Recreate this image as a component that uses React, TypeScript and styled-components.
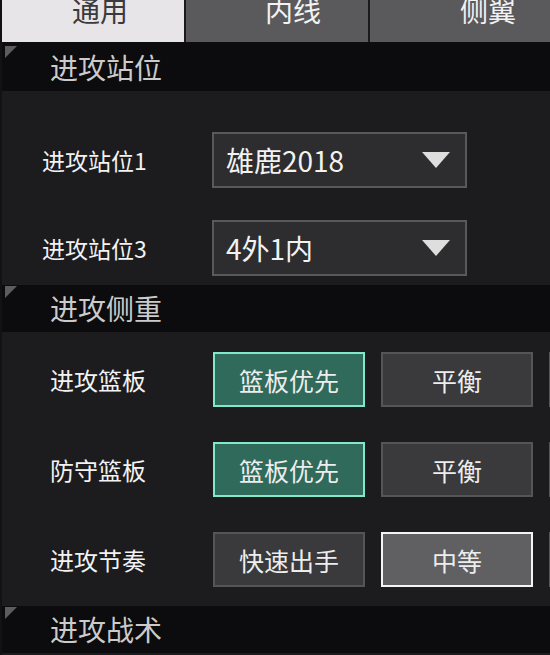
import styled, { createGlobalStyle } from 'styled-components';

const GlobalStyle = createGlobalStyle`
  html, body {
    margin: 0;
    padding: 0;
    background: #1c1b1d;
  }
  * {
    box-sizing: border-box;
  }
`;

type Choice = { text: string; state?: 'teal' | 'picked' };

// text in each tab sits a bit right of centre
const tabs = [
  { text: '通用', shift: 70 },
  { text: '内线', shift: 79 },
  { text: '侧翼', shift: 90 },
];

const stance = [
  { label: '进攻站位1', value: '雄鹿2018' },
  { label: '进攻站位3', value: '4外1内' },
];

const focus: Array<{ label: string; choices: Choice[] }> = [
  { label: '进攻篮板', choices: [{ text: '篮板优先', state: 'teal' }, { text: '平衡' }, { text: '' }] },
  { label: '防守篮板', choices: [{ text: '篮板优先', state: 'teal' }, { text: '平衡' }, { text: '' }] },
  { label: '进攻节奏', choices: [{ text: '快速出手' }, { text: '中等', state: 'picked' }, { text: '' }] },
];

const App = () => (
  <Page>
    <GlobalStyle />
    <TabBar>
      {tabs.map((t, i) => (
        <Tab key={t.text} $active={i === 0} $shift={t.shift}>
          <TabLabel>{t.text}</TabLabel>
        </Tab>
      ))}
    </TabBar>

    <SectionHeader>进攻站位</SectionHeader>
    <StanceList>
      {stance.map((row) => (
        <Row key={row.label}>
          <StanceLabel>{row.label}</StanceLabel>
          <Select>
            <span>{row.value}</span>
            <Arrow viewBox="0 0 28 16">
              <polygon points="0,0 28,0 14,16" fill="#dedede" />
            </Arrow>
          </Select>
        </Row>
      ))}
    </StanceList>

    <SectionHeader $tall>进攻侧重</SectionHeader>
    <FocusList>
      {focus.map((row) => (
        <Row key={row.label}>
          <FocusLabel>{row.label}</FocusLabel>
          <Choices>
            {row.choices.map((c, i) => (
              <ChoiceButton key={i} $state={c.state}>
                {c.text}
              </ChoiceButton>
            ))}
          </Choices>
        </Row>
      ))}
    </FocusList>

    <SectionHeader $tall>进攻战术</SectionHeader>
  </Page>
);

const Page = styled.div`
  width: 550px;
  height: 655px;
  overflow: hidden;
  background: #1c1b1d;
  border-left: 2px solid #121113;
  font-family: 'Noto Sans CJK SC', 'Noto Sans', sans-serif;
`;

const TabBar = styled.div`
  display: grid;
  grid-template-columns: 182px 182px 1fr;
  gap: 2px;
  height: 45px;
  background: #1a191b;
  border-bottom: 3px solid #0d0c0e;
`;

const Tab = styled.div<{ $active?: boolean; $shift: number }>`
  display: flex;
  overflow: hidden;
  padding-left: ${(p) => p.$shift}px;
  background: ${(p) => (p.$active ? '#e7e5e8' : '#5a595b')};
  color: ${(p) => (p.$active ? '#3a393b' : '#f2f2f2')};
`;

const TabLabel = styled.span`
  font-size: 28px;
  line-height: 20px;
  height: 20px;
  white-space: nowrap;
`;

const SectionHeader = styled.div<{ $tall?: boolean }>`
  position: relative;
  height: ${(p) => (p.$tall ? 47 : 46)}px;
  background: #0c0b0d;
  color: #cbcbcb;
  font-size: 28px;
  line-height: ${(p) => (p.$tall ? 47 : 44)}px;
  padding-left: 48px;

  &::before {
    content: '';
    position: absolute;
    left: 3px;
    top: 1px;
    border-top: 12px solid #5d5c5e;
    border-right: 12px solid transparent;
  }
`;

const StanceList = styled.div`
  display: flex;
  flex-direction: column;
  gap: 33px;
  padding: 41px 0 10px 40px;
`;

const FocusList = styled.div`
  display: flex;
  flex-direction: column;
  gap: 35px;
  padding: 20px 0 19px 48px;
`;

const Row = styled.div`
  display: flex;
  align-items: center;
  height: 55px;
`;

const StanceLabel = styled.div`
  flex: none;
  width: 170px;
  color: #f2f2f2;
  font-size: 23px;
  white-space: nowrap;
`;

const FocusLabel = styled.div`
  flex: none;
  width: 163px;
  color: #f2f2f2;
  font-size: 24px;
  white-space: nowrap;
`;

const Select = styled.div`
  flex: none;
  display: flex;
  align-items: center;
  justify-content: space-between;
  width: 255px;
  height: 56px;
  padding: 0 15px 0 12px;
  background: #2d2c2e;
  border: 2px solid #59585a;
  color: #f2f2f2;
  font-size: 28px;
`;

const Arrow = styled.svg`
  width: 28px;
  height: 16px;
`;

const Choices = styled.div`
  display: flex;
  gap: 16px;
`;

const ChoiceButton = styled.div<{ $state?: 'teal' | 'picked' }>`
  flex: none;
  width: 152px;
  height: 55px;
  display: flex;
  align-items: center;
  justify-content: center;
  font-size: 25px;
  color: #ededed;
  background: ${(p) =>
    p.$state === 'teal' ? '#2f6a5a' : p.$state === 'picked' ? '#605f61' : '#3a393b'};
  border: 2px solid
    ${(p) => (p.$state === 'teal' ? '#82e8cc' : p.$state === 'picked' ? '#f4f4f4' : '#555456')};
`;

export default App;
